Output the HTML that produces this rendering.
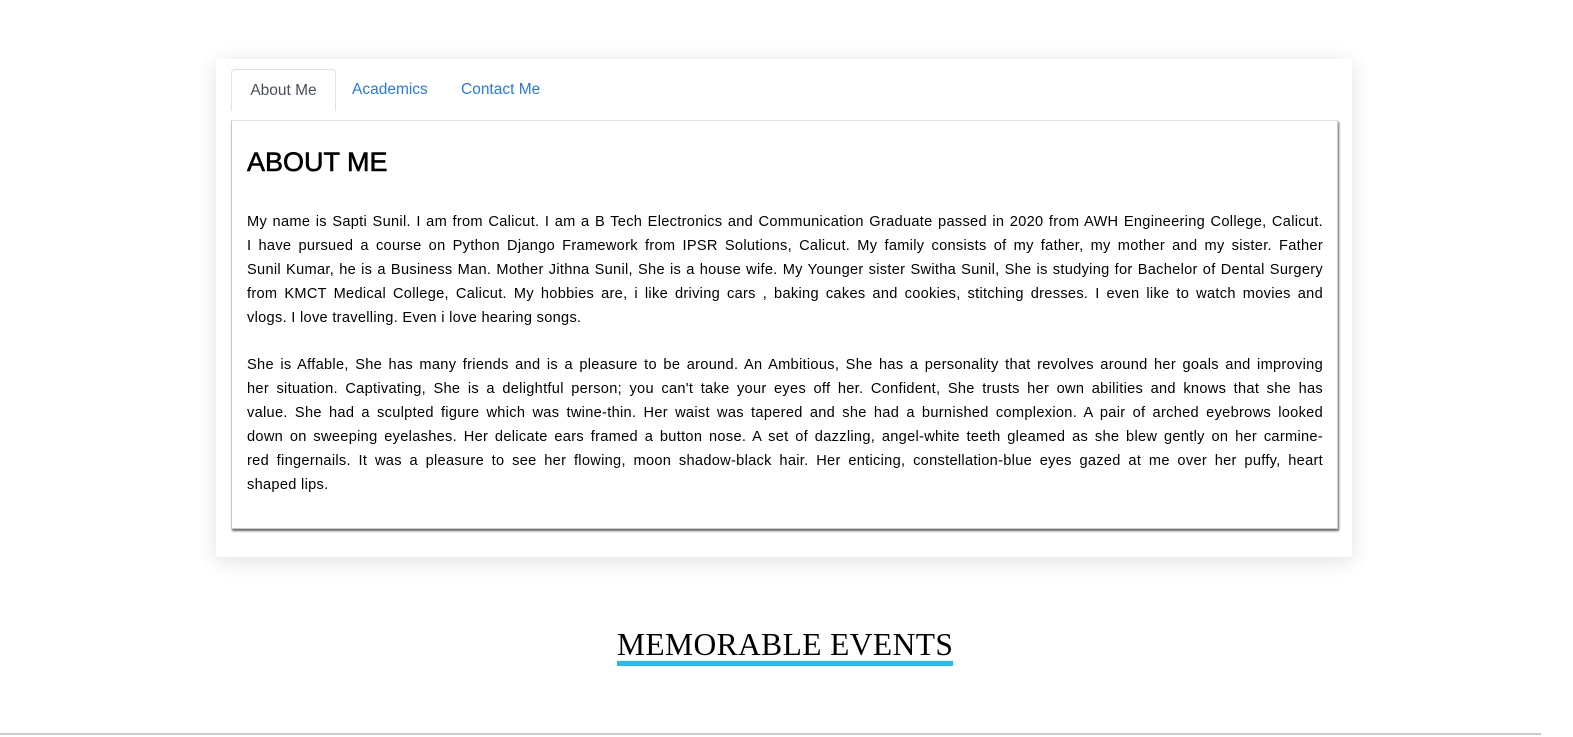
<!DOCTYPE html>
<html><head><style>
body{margin:0;width:1573px;height:737px;background:#fff;font-family:"Liberation Sans",sans-serif;position:relative;overflow:hidden}
.card{position:absolute;left:216px;top:59px;width:1136px;height:498px;background:#fff;box-shadow:0 4px 20px rgba(0,0,0,.12)}
.tabs{position:absolute;left:15px;top:10px;height:41px;font-size:15.5px}
.tab{position:absolute;top:0;height:41px;line-height:42px;white-space:nowrap}
.t1{left:0;width:103px;border:1px solid #dee2e6;border-bottom:none;border-radius:4px 4px 0 0;color:#495057;text-align:center;background:#fff}
.t2{left:121px;color:#2a7ae2}
.t3{left:230px;color:#2a7ae2}
.box{position:absolute;left:15px;top:61px;width:1105px;height:407px;border:1px solid #ccc;border-top-color:#dee2e6;box-shadow:1px 2px 2px rgba(0,0,0,.6);background:#fff}
h2{position:absolute;left:15px;top:26px;margin:0;font-size:27px;font-weight:normal;color:#000;-webkit-text-stroke:.6px #000}
.txt{position:absolute;left:15px;top:89px;width:1076px;font-size:14.6px;line-height:24px;color:#000;letter-spacing:.3px}
.txt div{text-align:justify;text-align-last:justify;white-space:nowrap}
.txt div.l{text-align-last:left}
.gap{height:23px}
.me{position:absolute;left:617px;top:628px;font-family:"Liberation Serif",serif;font-size:31.5px;line-height:33px;color:#000;border-bottom:5px solid #1ec0f0;letter-spacing:.4px}
.bar{position:absolute;left:0;bottom:2px;width:1541px;height:2px;background:#ccc}
</style></head><body>
<div class="card">
<div class="tabs"><div class="tab t1">About Me</div><div class="tab t2">Academics</div><div class="tab t3">Contact Me</div></div>
<div class="box">
<h2>ABOUT ME</h2>
<div class="txt">
<div>My name is Sapti Sunil. I am from Calicut. I am a B Tech Electronics and Communication Graduate passed in 2020 from AWH Engineering College, Calicut.</div>
<div>I have pursued a course on Python Django Framework from IPSR Solutions, Calicut. My family consists of my father, my mother and my sister. Father</div>
<div>Sunil Kumar, he is a Business Man. Mother Jithna Sunil, She is a house wife. My Younger sister Switha Sunil, She is studying for Bachelor of Dental Surgery</div>
<div>from KMCT Medical College, Calicut. My hobbies are, i like driving cars , baking cakes and cookies, stitching dresses. I even like to watch movies and</div>
<div class="l">vlogs. I love travelling. Even i love hearing songs.</div>
<div class="gap"></div>
<div>She is Affable, She has many friends and is a pleasure to be around. An Ambitious, She has a personality that revolves around her goals and improving</div>
<div>her situation. Captivating, She is a delightful person; you can't take your eyes off her. Confident, She trusts her own abilities and knows that she has</div>
<div>value. She had a sculpted figure which was twine-thin. Her waist was tapered and she had a burnished complexion. A pair of arched eyebrows looked</div>
<div>down on sweeping eyelashes. Her delicate ears framed a button nose. A set of dazzling, angel-white teeth gleamed as she blew gently on her carmine-</div>
<div>red fingernails. It was a pleasure to see her flowing, moon shadow-black hair. Her enticing, constellation-blue eyes gazed at me over her puffy, heart</div>
<div class="l">shaped lips.</div>
</div>
</div>
</div>
<div class="me">MEMORABLE EVENTS</div>
<div class="bar"></div>
</body></html>
